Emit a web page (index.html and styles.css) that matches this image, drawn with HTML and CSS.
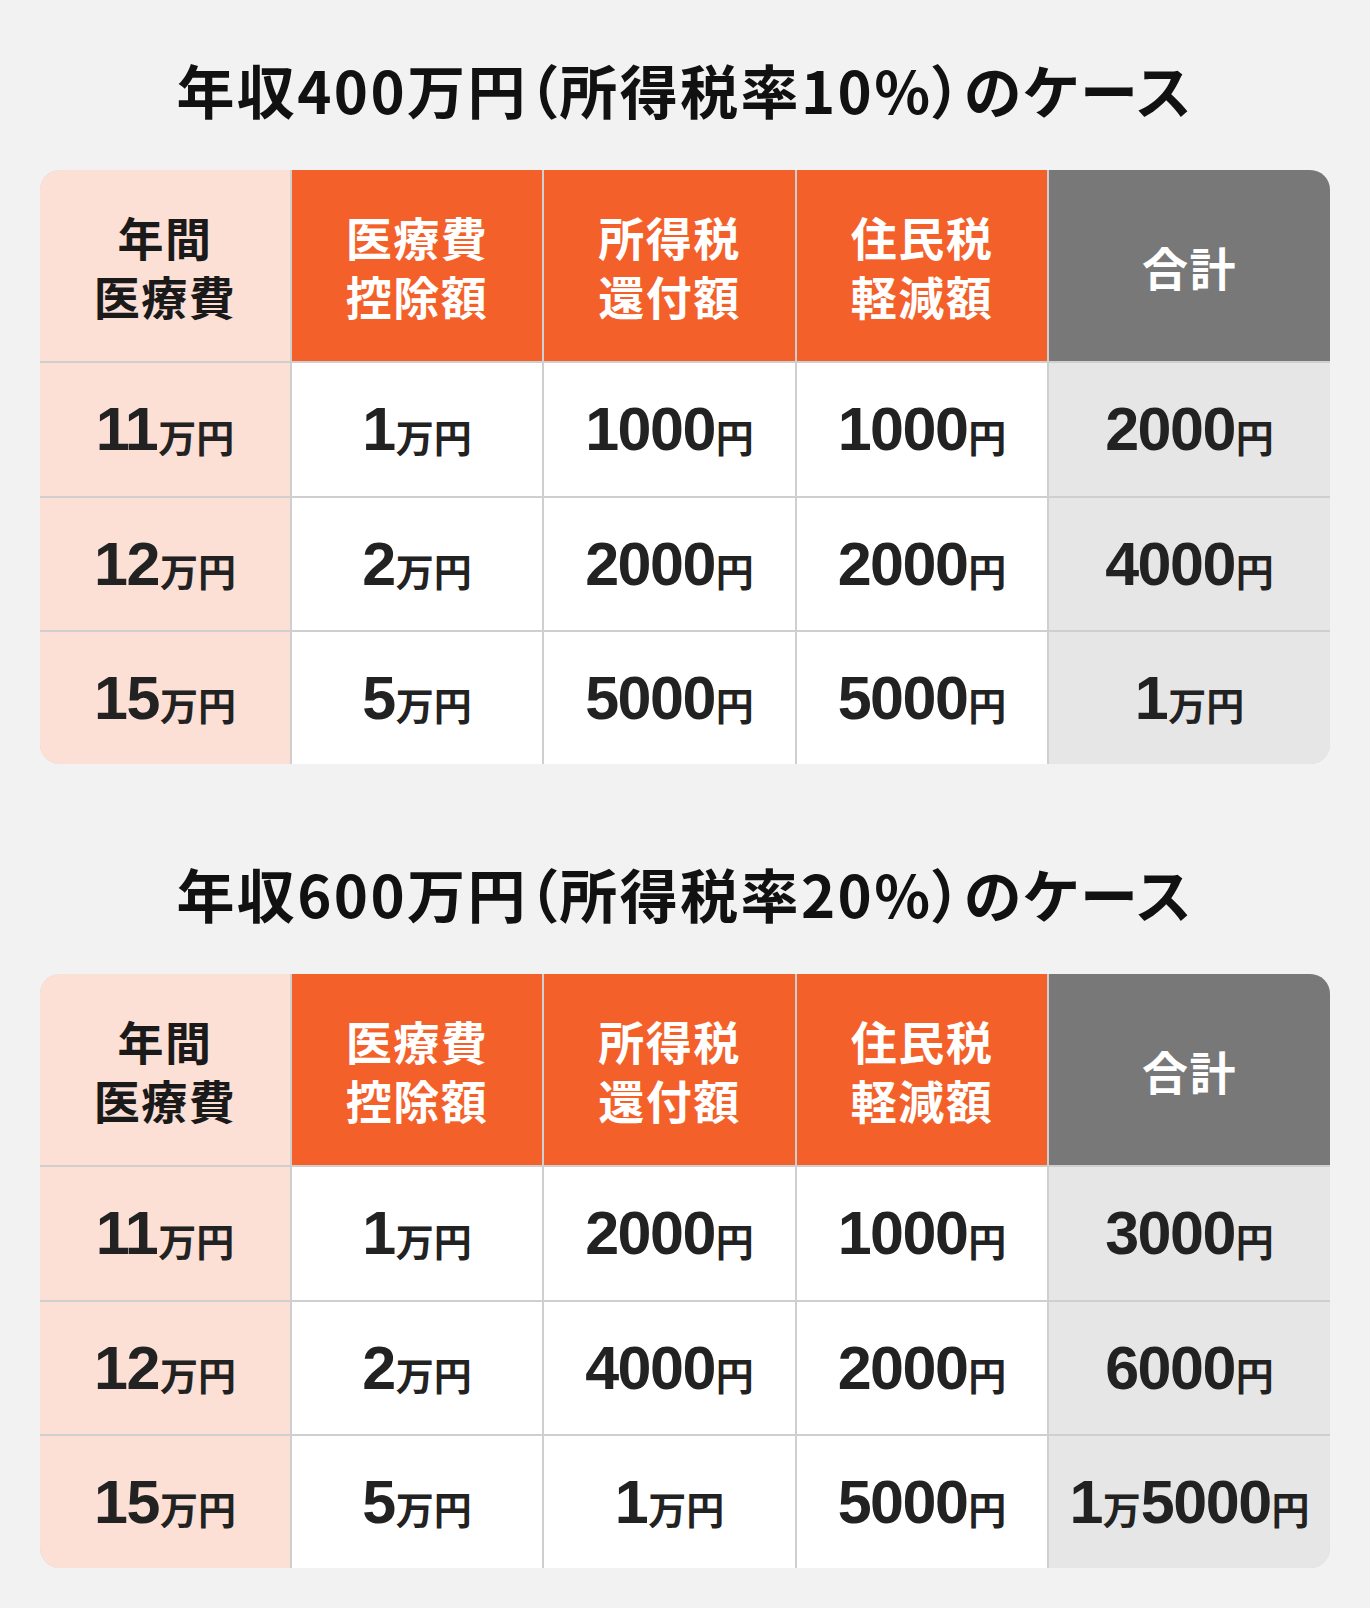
FILE: index.html
```html
<!DOCTYPE html>
<html lang="ja">
<head>
<meta charset="utf-8">
<link rel="stylesheet" href="styles.css">
</head>
<body>
<main class="page">
  <section class="case">
    <h2 class="title">年収400万円（所得税率10%）のケース</h2>
    <div class="table">
      <div class="cell head head-label"><span class="hl">年間</span><span class="hl">医療費</span></div>
      <div class="cell head head-orange"><span class="hl">医療費</span><span class="hl">控除額</span></div>
      <div class="cell head head-orange"><span class="hl">所得税</span><span class="hl">還付額</span></div>
      <div class="cell head head-orange"><span class="hl">住民税</span><span class="hl">軽減額</span></div>
      <div class="cell head head-total"><span class="hl">合計</span></div>

      <div class="cell label"><span class="num">11</span><span class="unit">万円</span></div>
      <div class="cell"><span class="num">1</span><span class="unit">万円</span></div>
      <div class="cell"><span class="num">1000</span><span class="unit">円</span></div>
      <div class="cell"><span class="num">1000</span><span class="unit">円</span></div>
      <div class="cell total"><span class="num">2000</span><span class="unit">円</span></div>

      <div class="cell label"><span class="num">12</span><span class="unit">万円</span></div>
      <div class="cell"><span class="num">2</span><span class="unit">万円</span></div>
      <div class="cell"><span class="num">2000</span><span class="unit">円</span></div>
      <div class="cell"><span class="num">2000</span><span class="unit">円</span></div>
      <div class="cell total"><span class="num">4000</span><span class="unit">円</span></div>

      <div class="cell label"><span class="num">15</span><span class="unit">万円</span></div>
      <div class="cell"><span class="num">5</span><span class="unit">万円</span></div>
      <div class="cell"><span class="num">5000</span><span class="unit">円</span></div>
      <div class="cell"><span class="num">5000</span><span class="unit">円</span></div>
      <div class="cell total"><span class="num">1</span><span class="unit">万円</span></div>
    </div>
  </section>

  <section class="case">
    <h2 class="title">年収600万円（所得税率20%）のケース</h2>
    <div class="table">
      <div class="cell head head-label"><span class="hl">年間</span><span class="hl">医療費</span></div>
      <div class="cell head head-orange"><span class="hl">医療費</span><span class="hl">控除額</span></div>
      <div class="cell head head-orange"><span class="hl">所得税</span><span class="hl">還付額</span></div>
      <div class="cell head head-orange"><span class="hl">住民税</span><span class="hl">軽減額</span></div>
      <div class="cell head head-total"><span class="hl">合計</span></div>

      <div class="cell label"><span class="num">11</span><span class="unit">万円</span></div>
      <div class="cell"><span class="num">1</span><span class="unit">万円</span></div>
      <div class="cell"><span class="num">2000</span><span class="unit">円</span></div>
      <div class="cell"><span class="num">1000</span><span class="unit">円</span></div>
      <div class="cell total"><span class="num">3000</span><span class="unit">円</span></div>

      <div class="cell label"><span class="num">12</span><span class="unit">万円</span></div>
      <div class="cell"><span class="num">2</span><span class="unit">万円</span></div>
      <div class="cell"><span class="num">4000</span><span class="unit">円</span></div>
      <div class="cell"><span class="num">2000</span><span class="unit">円</span></div>
      <div class="cell total"><span class="num">6000</span><span class="unit">円</span></div>

      <div class="cell label"><span class="num">15</span><span class="unit">万円</span></div>
      <div class="cell"><span class="num">5</span><span class="unit">万円</span></div>
      <div class="cell"><span class="num">1</span><span class="unit">万円</span></div>
      <div class="cell"><span class="num">5000</span><span class="unit">円</span></div>
      <div class="cell total"><span class="num">1</span><span class="unit">万</span><span class="num">5000</span><span class="unit">円</span></div>
    </div>
  </section>
</main>
</body>
</html>
```

FILE: styles.css
```css
html, body {
  margin: 0;
  padding: 0;
  background: #f2f2f2;
}

.page {
  width: 1370px;
  padding: 60px 40px 0;
  box-sizing: border-box;
  font-family: "Noto Sans CJK JP", "Noto Sans", sans-serif;
  color: #222;
}

.case + .case {
  margin-top: 100px;
}

.title {
  margin: 0 0 52px;
  height: 58px;
  font-size: 58px;
  line-height: 58px;
  font-weight: 700;
  color: #111;
  text-align: center;
  font-feature-settings: "palt";
  letter-spacing: 2.4px;
}

.table {
  display: grid;
  grid-template-columns: 250px 250px 251px 250px 281px;
  grid-template-rows: 191px 133px 132px 132px;
  gap: 2px;
  background: #cfcfcf;
  border-radius: 20px;
  overflow: hidden;
}

.cell {
  display: flex;
  align-items: center;
  justify-content: center;
  background: #fff;
  white-space: nowrap;
}

.head {
  flex-direction: column;
  gap: 13px;
  font-size: 46px;
  font-weight: 700;
  text-align: center;
  color: #fff;
  letter-spacing: 1.5px;
}

.hl {
  display: block;
  height: 46px;
  line-height: 46px;
}

.head-label {
  background: #fce0d6;
  color: #1a1a1a;
}

.head-orange {
  background: #f4602a;
}

.head-total {
  background: #787878;
}

.label {
  background: #fce0d6;
}

.total {
  background: #e6e6e6;
}

.num {
  font-family: "Liberation Sans", Arial, sans-serif;
  font-weight: 700;
  font-size: 61px;
  letter-spacing: -1.5px;
  line-height: 1;
}

.unit {
  font-family: "Noto Sans CJK JP", sans-serif;
  font-weight: 700;
  font-size: 38px;
  line-height: 1;
  margin-left: 1px;
  position: relative;
  top: 6px;
}
```
